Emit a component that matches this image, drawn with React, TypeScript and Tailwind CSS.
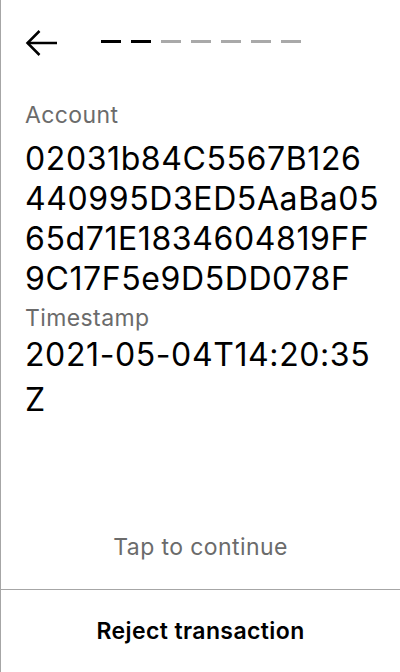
const accountLines = ["02031b84C5567B126", "440995D3ED5AaBa05", "65d71E1834604819FF", "9C17F5e9D5DD078F"];
const timestampLines = ["2021-05-04T14:20:35", "Z"];

const Dashes = ({ done, total }: { done: number; total: number }) => (
  <div className="flex gap-[10px]">
    {Array.from({ length: total }).map((_, i) => (
      <div
        key={i}
        className={i < done ? "h-[3px] w-5 bg-black" : "h-[3px] w-5 bg-[#a9a9a9]"}
      />
    ))}
  </div>
);

const BackArrow = () => (
  <svg width="32" height="28" viewBox="0 0 32 28" fill="none" stroke="black" strokeWidth="2.5">
    <path d="M32 14H2.5" />
    <path d="M14.5 2L2.5 14L14.5 26" />
  </svg>
);

const App = () => {
  return (
    <div className="flex h-[672px] w-[400px] flex-col border-l border-[#a6a6a6] bg-white font-['Inter',sans-serif] text-black">
      {/* Header */}
      <div className="flex items-center pl-6 pt-[29px]">
        <BackArrow />
        <div className="ml-[44px] -mt-[3px]">
          <Dashes done={2} total={7} />
        </div>
      </div>

      {/* Fields */}
      <div className="mt-[44px] px-6">
        <div className="text-[23px] leading-7 tracking-[0.4px] text-[#6b6b6b]">Account</div>
        <div className="mt-[10px] text-[32px] leading-10 tracking-[0.6px]">
          {accountLines.map((l) => (
            <div key={l} className="whitespace-nowrap">{l}</div>
          ))}
        </div>
        <div className="mt-[5px] text-[23px] leading-7 tracking-[0.4px] text-[#6b6b6b]">Timestamp</div>
        <div className="text-[32px] leading-[45px] tracking-[0.6px]">
          {timestampLines.map((l) => (
            <div key={l} className="whitespace-nowrap">{l}</div>
          ))}
        </div>
      </div>

      <div className="flex-1" />

      <div className="mb-[28px] text-center text-[23px] leading-7 tracking-[0.4px] text-[#6b6b6b]">
        Tap to continue
      </div>

      <div className="flex h-[83px] items-center justify-center border-t border-[#a6a6a6]">
        <span className="text-[23px] font-semibold leading-7 tracking-[0.4px]">Reject transaction</span>
      </div>
    </div>
  );
};

export default App;
